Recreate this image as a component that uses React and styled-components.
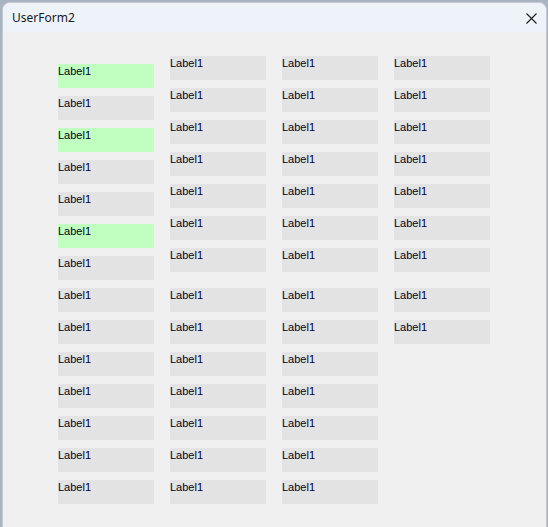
import React from 'react';
import styled, {createGlobalStyle} from 'styled-components';

const GlobalStyle = createGlobalStyle`
  html, body {
    margin: 0;
    padding: 0;
    height: 100%;
    background: #a9b4c2;
  }
  #root {
    height: 100%;
  }
`;

// 14 labels per column in the first three columns, 9 in the last
const columns = [
    {offset: 8, groups: [14], green: [0, 2, 5]},
    {offset: 0, groups: [7, 7], green: []},
    {offset: 0, groups: [7, 7], green: []},
    {offset: 0, groups: [7, 2], green: []},
];

export default () => (
    <>
        <GlobalStyle />
        <Desktop>
            <Window>
                <TitleBar>
                    <Title>UserForm2</Title>
                    <CloseButton>
                        <svg width="11" height="11" viewBox="0 0 11 11">
                            <path d="M0.5 0.5 L10.5 10.5 M10.5 0.5 L0.5 10.5" stroke="#1b1b1b" strokeWidth="1.1" />
                        </svg>
                    </CloseButton>
                </TitleBar>
                <FormBody>
                    {columns.map((col, ci) => {
                        let idx = 0;
                        return (
                            <Column key={ci} $offset={col.offset}>
                                {col.groups.map((count, gi) => (
                                    <Group key={gi}>
                                        {Array.from({length: count}).map(() => {
                                            const i = idx++;
                                            return (
                                                <Label key={i} $green={col.green.includes(i)}>
                                                    Label1
                                                </Label>
                                            );
                                        })}
                                    </Group>
                                ))}
                            </Column>
                        );
                    })}
                </FormBody>
            </Window>
        </Desktop>
    </>
);

const Desktop = styled.div`
  height: 100%;
  box-sizing: border-box;
  padding: 2px 1px 0 2px;
  display: flex;
  overflow: hidden;
`;

const Window = styled.div`
  flex: 1;
  display: flex;
  flex-direction: column;
  border: 1px solid #c4c9d0;
  border-bottom: none;
  border-radius: 8px 8px 0 0;
  background: #f0f0f0;
  overflow: hidden;
`;

const TitleBar = styled.div`
  height: 29px;
  flex-shrink: 0;
  display: flex;
  align-items: center;
  justify-content: space-between;
  padding: 0 9px 0 9px;
  background: #eef3fa;
`;

const Title = styled.div`
  font-family: "Segoe UI", "Noto Sans", sans-serif;
  font-size: 12px;
  color: #1a1a1a;
`;

const CloseButton = styled.div`
  display: flex;
  align-items: center;
  margin-top: 2px;
`;

const FormBody = styled.div`
  flex: 1;
  display: flex;
  gap: 16px;
  padding: 24px 0 0 55px;
`;

const Column = styled.div`
  display: flex;
  flex-direction: column;
  gap: 16px;
  margin-top: ${p => p.$offset}px;
`;

const Group = styled.div`
  display: flex;
  flex-direction: column;
  gap: 8px;
`;

const Label = styled.div`
  width: 96px;
  height: 24px;
  box-sizing: border-box;
  padding-top: 1px;
  background: ${p => (p.$green ? '#c0ffc0' : '#e3e3e3')};
  font-family: "Liberation Sans", Arial, sans-serif;
  font-size: 11px;
  line-height: 13px;
  color: #000020;
`;
